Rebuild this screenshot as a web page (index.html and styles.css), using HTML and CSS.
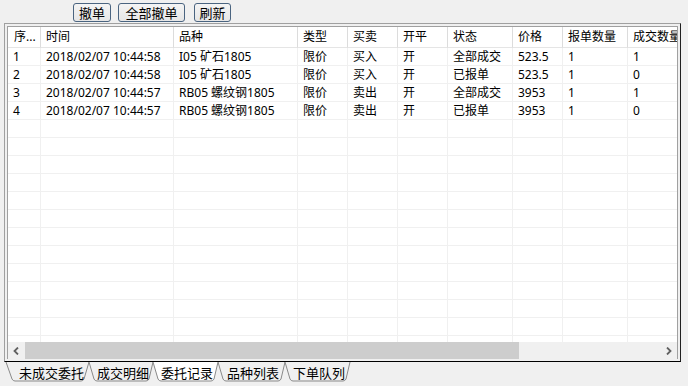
FILE: index.html
```html
<!DOCTYPE html>
<html lang="zh-CN">
<head>
    <meta charset="UTF-8">
    <title>委托记录</title>
    <link rel="stylesheet" href="styles.css">
</head>
<body>
    <div class="toolbar">
        <button class="btn btn-cancel">撤单</button>
        <button class="btn btn-cancel-all">全部撤单</button>
        <button class="btn btn-refresh">刷新</button>
    </div>

    <div class="frame">
        <div class="grid">
            <div class="row head">
                <div class="cell c1">序...</div>
                <div class="cell c2">时间</div>
                <div class="cell c3">品种</div>
                <div class="cell c4">类型</div>
                <div class="cell c5">买卖</div>
                <div class="cell c6">开平</div>
                <div class="cell c7">状态</div>
                <div class="cell c8">价格</div>
                <div class="cell c9">报单数量</div>
                <div class="cell c10">成交数量</div>
            </div>
            <div class="rows" id="rows"></div>
            <div class="hscroll">
                <div class="arrow">
                    <svg width="7" height="8" viewBox="0 0 7 8"><path d="M5 0.5 L1.5 4 L5 7.5" fill="none" stroke="#606060" stroke-width="1.8"/></svg>
                </div>
                <div class="thumb"></div>
                <div class="track"></div>
                <div class="arrow">
                    <svg width="7" height="8" viewBox="0 0 7 8"><path d="M2 0.5 L5.5 4 L2 7.5" fill="none" stroke="#606060" stroke-width="1.8"/></svg>
                </div>
            </div>
        </div>
    </div>

    <div class="tabs">
        <div class="tab t1"><svg class="tab-shape" viewBox="0 0 83 20" preserveAspectRatio="none"><path d="M0 0 L6 17 Q7 19 9 19 L75 19 Q77 19 78 17 L83 0"/></svg><span>未成交委托</span></div>
        <div class="tab t2"><svg class="tab-shape" viewBox="0 0 64 20" preserveAspectRatio="none"><path d="M0 0 L5 17 Q6 19 8 19 L57 19 Q59 19 60 17 L64 0"/></svg><span>成交明细</span></div>
        <div class="tab t3 active"><svg class="tab-shape" viewBox="0 0 65 20" preserveAspectRatio="none"><path d="M0 0 L5 17 Q6 19 8 19 L58 19 Q60 19 61 17 L65 0"/></svg><span>委托记录</span></div>
        <div class="tab t4"><svg class="tab-shape" viewBox="0 0 67 20" preserveAspectRatio="none"><path d="M0 0 L5 17 Q6 19 8 19 L60 19 Q62 19 63 17 L67 0"/></svg><span>品种列表</span></div>
        <div class="tab t5"><svg class="tab-shape" viewBox="0 0 65 20" preserveAspectRatio="none"><path d="M0 0 L5 17 Q6 19 8 19 L58 19 Q60 19 61 17 L65 0"/></svg><span>下单队列</span></div>
    </div>

    <script>
        // 委托记录数据
        const orders = [
            ['1', '2018/02/07 10:44:58', 'I05 矿石1805', '限价', '买入', '开', '全部成交', '523.5', '1', '1'],
            ['2', '2018/02/07 10:44:58', 'I05 矿石1805', '限价', '买入', '开', '已报单', '523.5', '1', '0'],
            ['3', '2018/02/07 10:44:57', 'RB05 螺纹钢1805', '限价', '卖出', '开', '全部成交', '3953', '1', '1'],
            ['4', '2018/02/07 10:44:57', 'RB05 螺纹钢1805', '限价', '卖出', '开', '已报单', '3953', '1', '0']
        ];

        const rows = document.getElementById('rows');
        for (let i = 0; i < 17; i++) {
            const row = document.createElement('div');
            row.className = 'row';
            const data = orders[i] || [];
            for (let c = 0; c < 10; c++) {
                const cell = document.createElement('div');
                cell.className = 'cell c' + (c + 1);
                cell.textContent = data[c] || '';
                row.appendChild(cell);
            }
            rows.appendChild(row);
        }
    </script>
</body>
</html>
```

FILE: styles.css
```css
body {
    margin: 0;
    width: 688px;
    height: 386px;
    overflow: hidden;
    background-color: #f0f0f0;
    font-family: "Noto Sans", "Noto Sans CJK SC", sans-serif;
    font-size: 12px;
    color: #000;
}

.toolbar {
    height: 23px;
    display: flex;
    align-items: flex-start;
    padding-left: 73px;
    box-sizing: border-box;
    padding-top: 3px;
}

.btn {
    height: 19px;
    padding: 0;
    margin: 0;
    font-family: "Noto Sans CJK SC", sans-serif;
    font-size: 13px;
    line-height: 16px;
    color: #000;
    background: linear-gradient(#f4f4f4, #e6e6e6);
    border: 1px solid #4a6480;
    border-radius: 3px;
}

.btn-cancel { width: 38px; }
.btn-cancel-all { width: 67px; margin-left: 7px; }
.btn-refresh { width: 37px; margin-left: 9px; }

.frame {
    margin-left: 4px;
    width: 677px;
    height: 339px;
    box-sizing: border-box;
    border: 1px solid;
    border-color: #a0a0a0 #202020 #000 #a0a0a0;
    padding: 2px;
}

.grid {
    height: 100%;
    box-sizing: border-box;
    border: 1px solid #a0a0a0;
    border-bottom: none;
    background-color: #fff;
    display: flex;
    flex-direction: column;
    overflow: hidden;
}

.row {
    display: flex;
    height: 18px;
    flex-shrink: 0;
}

.cell {
    flex-shrink: 0;
    box-sizing: border-box;
    height: 100%;
    padding-left: 5px;
    line-height: 17px;
    white-space: nowrap;
    overflow: hidden;
    border-right: 1px solid #f0f0f0;
    border-bottom: 1px solid #f0f0f0;
}

.row.head {
    height: 21px;
}

.head .cell {
    line-height: 20px;
    border-right-color: #dcdcdc;
    border-bottom-color: #e5e5e5;
    padding-left: 5px;
}

.head .c1 { padding-left: 6px; }

.c1 { width: 33px; }
.c2 { width: 133px; }
.c3 { width: 124px; }
.c4 { width: 50px; }
.c5 { width: 50px; }
.c6 { width: 50px; }
.c7 { width: 65px; }
.c8 { width: 50px; }
.c9 { width: 65px; }
.c10 { width: 80px; }

.rows {
    flex: 1;
    overflow: hidden;
}

.hscroll {
    height: 17px;
    flex-shrink: 0;
    display: flex;
    background-color: #f0f0f0;
}

.arrow {
    width: 17px;
    display: flex;
    align-items: center;
    justify-content: center;
}

.thumb {
    width: 494px;
    background-color: #cdcdcd;
}

.track {
    flex: 1;
}

.tabs {
    display: flex;
    padding-left: 6px;
    height: 21px;
}

.tab {
    position: relative;
    height: 20px;
    display: flex;
    align-items: center;
    font-family: "Noto Sans CJK SC", sans-serif;
    font-size: 13px;
    line-height: 18px;
}

.tab span {
    position: relative;
    padding-top: 1px;
}

.tab-shape {
    position: absolute;
    left: 0;
    top: 0;
    width: 100%;
    height: 20px;
    overflow: visible;
}

.tab-shape path {
    fill: #f0f0f0;
    stroke: #8a8a8a;
    stroke-width: 1;
}

.tab.active .tab-shape path {
    fill: #fff;
}

.tab.active {
    z-index: 1;
}

.t1 { width: 83px; padding-left: 13px; box-sizing: border-box; }
.t2 { width: 64px; padding-left: 8px; box-sizing: border-box; }
.t3 { width: 65px; padding-left: 8px; box-sizing: border-box; }
.t4 { width: 67px; padding-left: 9px; box-sizing: border-box; }
.t5 { width: 65px; padding-left: 8px; box-sizing: border-box; }
```
